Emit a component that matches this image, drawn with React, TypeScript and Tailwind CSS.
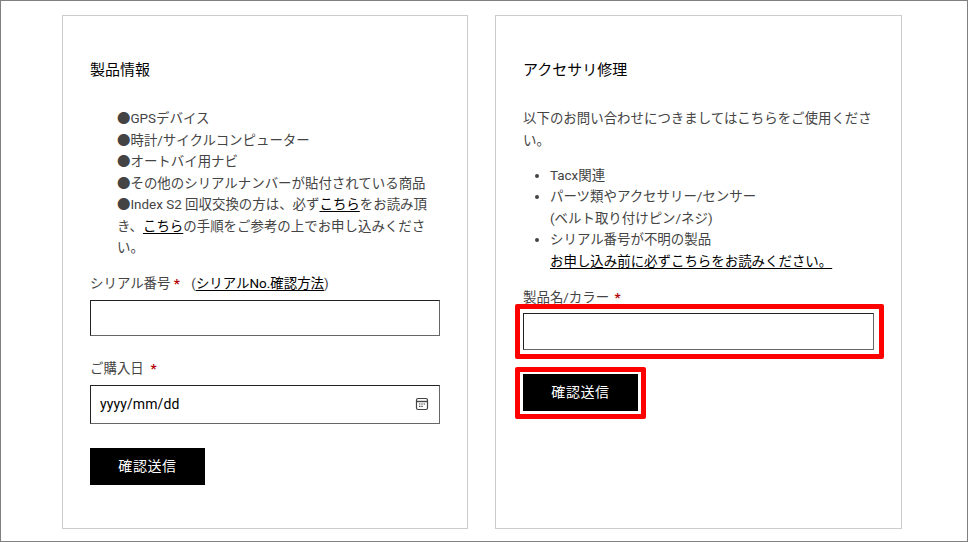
const FONT = "font-['Roboto','Noto_Sans_CJK_JP',sans-serif]";

function Req() {
  return <span className="font-bold text-[#b00000]">*</span>;
}

function TextLink({ children }: { children: React.ReactNode }) {
  return <a className="text-black underline underline-offset-2">{children}</a>;
}

function SubmitButton() {
  return (
    <button className="flex h-[37px] w-[115px] items-center justify-center bg-black pt-[1px] text-[14px] tracking-[0.6px] text-white">
      確認送信
    </button>
  );
}

function CalendarIcon() {
  return (
    <svg width="14" height="14" viewBox="0 0 14 14" fill="none" className="text-[#444]">
      <rect x="1.5" y="1.5" width="11" height="11" rx="1.5" stroke="currentColor" strokeWidth="1.2" />
      <path d="M1.5 4.5h11" stroke="currentColor" strokeWidth="1.4" />
      <path d="M4 7h1.4M6.3 7h1.4M8.6 7H10M4 9.4h1.4M6.3 9.4h1.4" stroke="currentColor" strokeWidth="1.2" />
    </svg>
  );
}

export default function App() {
  return (
    <div className={`${FONT} flex h-[542px] w-[968px] items-start gap-[27px] border border-[#808080] bg-white pl-[61px] pt-[14px] text-[13.44px] leading-[21.5px] text-[#444]`}>
      <section className="h-[514px] w-[406px] border border-[#cccccc] px-[27px] pt-[44px]">
        <h2 className="text-[15px] leading-[21px] text-black">製品情報</h2>
        <div className="mt-[27px] pl-[27px] pr-[9px]">
          <p>●GPSデバイス</p>
          <p>●時計/サイクルコンピューター</p>
          <p>●オートバイ用ナビ</p>
          <p>●その他のシリアルナンバーが貼付されている商品</p>
          <p>
            ●Index S2 回収交換の方は、必ず<TextLink>こちら</TextLink>をお読み頂き、<TextLink>こちら</TextLink>の手順をご参考の上でお申し込みください。
          </p>
        </div>
        <label className="mt-[14px] block">
          シリアル番号 <Req /> <span className="ml-[8px]">(</span><TextLink>シリアルNo.確認方法</TextLink>)
        </label>
        <input className="mt-[6px] block h-[36px] w-[350px] border border-b-[#666] border-l-[#222] border-r-[#666] border-t-[#222] bg-white" />
        <label className="mt-[22px] block">
          ご購入日 &nbsp;<Req />
        </label>
        <div className="mt-[5px] flex h-[39px] w-[350px] items-center justify-between border border-b-[#666] border-l-[#222] border-r-[#666] border-t-[#222] pl-[9px] pr-[10px] text-[14px] text-black">
          <span className="pt-[1px] tracking-[0.1px]">yyyy/mm/dd</span>
          <CalendarIcon />
        </div>
        <div className="mt-[24px]">
          <SubmitButton />
        </div>
      </section>

      <section className="h-[514px] w-[407px] border border-[#cccccc] px-[27px] pt-[44px]">
        <h2 className="text-[15px] leading-[21px] text-black">アクセサリ修理</h2>
        <p className="mt-[27px]">以下のお問い合わせにつきましてはこちらをご使用ください。</p>
        <ul className="mt-[13.5px] list-disc pl-[27px]">
          <li>Tacx関連</li>
          <li>
            パーツ類やアクセサリー/センサー
            <br />
            (ベルト取り付けピン/ネジ)
          </li>
          <li>
            シリアル番号が不明の製品
            <br />
            <TextLink>お申し込み前に必ずこちらをお読みください。</TextLink>
          </li>
        </ul>
        <label className="mt-[14.5px] block">
          製品名/カラー <span className="ml-[2px]"><Req /></span>
        </label>
        <div className="relative mt-[5px] w-[351px]">
          <input className="block h-[37px] w-[351px] border border-b-[#666] border-l-[#222] border-r-[#666] border-t-[#222] bg-white" />
          <div className="absolute -bottom-[9px] -left-[8px] -right-[10px] -top-[9px] rounded-[2px] border-[5px] border-[#ff0000]" />
        </div>
        <div className="relative mt-[24px] w-[115px]">
          <SubmitButton />
          <div className="absolute -bottom-[8px] -left-[8px] -right-[8px] -top-[7px] rounded-[2px] border-[5px] border-[#ff0000]" />
        </div>
      </section>
    </div>
  );
}
